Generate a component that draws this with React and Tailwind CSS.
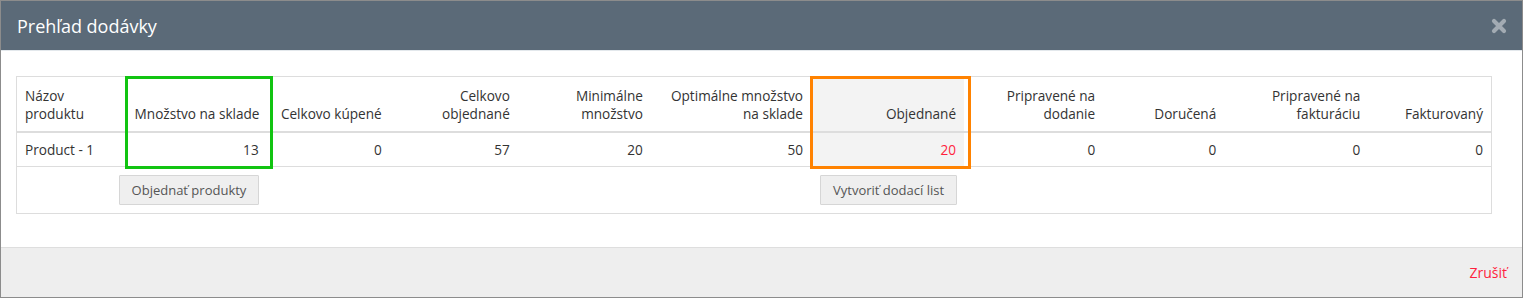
import React from "react";

const columns = [
  { w: 110, head: ["Názov", "produktu"], value: "Product - 1", align: "left" },
  { w: 140, head: ["Množstvo na sklade"], value: "13" },
  { w: 123, head: ["Celkovo kúpené"], value: "0" },
  { w: 128, head: ["Celkovo", "objednané"], value: "57" },
  { w: 133, head: ["Minimálne", "množstvo"], value: "20" },
  { w: 160, head: ["Optimálne množstvo", "na sklade"], value: "50" },
  { w: 153, head: ["Objednané"], value: "20", highlight: true },
  { w: 139, head: ["Pripravené na", "dodanie"], value: "0" },
  { w: 121, head: ["Doručená"], value: "0" },
  { w: 144, head: ["Pripravené na", "fakturáciu"], value: "0" },
  { w: 123, head: ["Fakturovaný"], value: "0" },
];

const CloseIcon = () => (
  <svg width="16" height="16" viewBox="0 0 16 16">
    <path
      d="M3 3 L13 13 M13 3 L3 13"
      stroke="#a3abb3"
      strokeWidth="4.2"
      strokeLinecap="round"
    />
  </svg>
);

const Button = ({ children, className = "" }) => (
  <button
    className={`h-[30px] px-[12px] bg-[#efefef] border border-[#d6d6d6] text-[#555] text-[13px] leading-none rounded-[1px] ${className}`}
  >
    {children}
  </button>
);

const App = () => {
  return (
    <div
      className="w-[1523px] h-[298px] border border-[#8c8c8c] bg-white flex flex-col overflow-hidden"
      style={{ fontFamily: '"Open Sans", "Liberation Sans", sans-serif' }}
    >
      {/* Header */}
      <div className="h-[50px] shrink-0 bg-[#5b6a78] flex items-center justify-between pl-[16px] pr-[15px] border-b border-[#e3e8ec]">
        <h1 className="text-white text-[18px] leading-none">Prehľad dodávky</h1>
        <CloseIcon />
      </div>

      {/* Body */}
      <div className="flex-1 pt-[25px] pl-[15px] pr-[30px]">
        <div className="relative">
          <table className="table-fixed border-collapse border border-[#dddddd] text-[13.6px] text-[#333] w-[1476px]">
            <colgroup>
              {columns.map((c, i) => (
                <col key={i} style={{ width: c.w }} />
              ))}
            </colgroup>
            <thead>
              <tr className="border-b-2 border-[#dddddd]">
                {columns.map((c, i) => (
                  <th
                    key={i}
                    className={`h-[55px] align-bottom font-normal px-[8px] pb-[8px] leading-[18px] whitespace-nowrap ${
                      c.align === "left" ? "text-left" : "text-right"
                    } ${c.highlight ? "bg-[#f3f3f3]" : ""}`}
                  >
                    {c.head.map((line, j) => (
                      <div key={j}>{line}</div>
                    ))}
                  </th>
                ))}
              </tr>
            </thead>
            <tbody>
              <tr className="border-b border-[#dddddd]">
                {columns.map((c, i) => (
                  <td
                    key={i}
                    className={`h-[35px] px-[8px] leading-[17px] ${
                      c.align === "left" ? "text-left" : "text-right"
                    } ${c.highlight ? "bg-[#f3f3f3] text-[#ff1f3d]" : ""}`}
                  >
                    {c.value}
                  </td>
                ))}
              </tr>
              <tr>
                <td className="h-[47px]"></td>
                <td className="align-top pt-[8px]">
                  <Button className="-ml-[8px]">Objednať produkty</Button>
                </td>
                <td colSpan={4}></td>
                <td className="align-top pt-[8px] pl-[9px]">
                  <Button>Vytvoriť dodací list</Button>
                </td>
                <td colSpan={4}></td>
              </tr>
            </tbody>
          </table>

          {/* annotation boxes */}
          <div className="absolute left-[109px] top-0 w-[148px] h-[93px] border-[3px] border-[#11c411] pointer-events-none" />
          <div className="absolute left-[794px] top-0 w-[161px] h-[93px] border-[3px] border-[#ff8200] pointer-events-none" />
        </div>
      </div>

      {/* Footer */}
      <div className="h-[50px] shrink-0 bg-[#eeeeee] border-t border-[#dedede] flex items-center justify-end pr-[15px]">
        <span className="text-[#ff1f3d] text-[14px]">Zrušiť</span>
      </div>
    </div>
  );
};

export default App;
